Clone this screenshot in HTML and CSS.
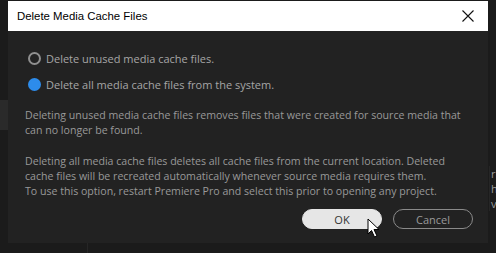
FILE: index.html
```html
<!DOCTYPE html>
<html lang="en">
  <head>
    <meta charset="UTF-8" />
    <title>Delete Media Cache Files</title>
    <link rel="stylesheet" href="styles.css">
  </head>
  <body>
    <div class="screen">
      <div class="side-left"></div>
      <div class="side-right">
        <span>rb</span>
        <span>h</span>
        <span>ve</span>
      </div>

      <div class="dialog">
        <div class="titlebar">
          <span class="title">Delete Media Cache Files</span>
          <svg class="close" width="12" height="12" viewBox="0 0 12 12">
            <path d="M0.5 0.5 L11.5 11.5 M11.5 0.5 L0.5 11.5" stroke="#111" stroke-width="1.1" fill="none" />
          </svg>
        </div>

        <div class="content">
          <label class="option">
            <span class="radio"></span>
            Delete unused media cache files.
          </label>
          <label class="option">
            <span class="radio checked"></span>
            Delete all media cache files from the system.
          </label>

          <p class="info">
            Deleting unused media cache files removes files that were created for source media that<br>
            can no longer be found.
          </p>
          <p class="info">
            Deleting all media cache files deletes all cache files from the current location. Deleted<br>
            cache files will be recreated automatically whenever source media requires them.<br>
            To use this option, restart Premiere Pro and select this prior to opening any project.
          </p>

          <div class="buttons">
            <button class="btn btn-primary">OK</button>
            <button class="btn">Cancel</button>
          </div>
        </div>
      </div>

      <div class="bottom-strip"></div>

      <!-- mouse pointer over OK -->
      <svg class="cursor" width="14" height="21" viewBox="0 0 14 21">
        <path d="M1 1 L1 16 L4.5 12.5 L7.5 19 L10 18 L7 11.5 L12 11.5 Z" fill="#fff" stroke="#000" stroke-width="1" />
      </svg>
    </div>
  </body>
</html>
```

FILE: styles.css
```css
body {
  margin: 0;
  background-color: #1b1b1b;
  font-family: "Open Sans", "Noto Sans", sans-serif;
}

.screen {
  position: relative;
  width: 496px;
  height: 253px;
  overflow: hidden;
}

.side-left {
  position: absolute;
  left: 0;
  top: 100px;
  width: 8px;
  height: 30px;
  background-color: #2a2a2a;
}

.side-right {
  position: absolute;
  left: 489px;
  top: 166px;
  display: flex;
  flex-direction: column;
  font-size: 11px;
  line-height: 15px;
  color: #9a9a9a;
  border-left: 1px solid #262626;
  padding-left: 1px;
}

.dialog {
  margin: 1px 0 0 8px;
  width: 480px;
  background-color: #222222;
}

.titlebar {
  height: 30px;
  background-color: #ffffff;
  display: flex;
  align-items: center;
  justify-content: space-between;
  padding: 0 14px 0 9px;
}

.title {
  font-family: "Liberation Sans", Arial, sans-serif;
  font-size: 11.4px;
  color: #000;
}

.content {
  height: 212px;
  box-sizing: border-box;
  padding: 21px 0 0 17px;
  color: #a6a6a6;
  font-size: 11px;
}

.option {
  display: flex;
  align-items: center;
  gap: 5px;
  height: 13px;
  margin-bottom: 13px;
  margin-left: 3px;
}

.option + .option {
  margin-bottom: 17px;
}

.radio {
  width: 9px;
  height: 9px;
  border: 2px solid #8f8f8f;
  border-radius: 50%;
}

.radio.checked {
  border-color: #2d8ceb;
  background-color: #2d8ceb;
}

.info {
  margin: 0 0 16px 0;
  line-height: 15px;
  color: #999999;
  font-size: 10.6px;
}

.buttons {
  display: flex;
  justify-content: flex-end;
  gap: 11px;
  padding-right: 15px;
  margin-top: -6px;
}

.btn {
  width: 80px;
  height: 20px;
  border-radius: 10px;
  border: 1px solid #8a8a8a;
  background: transparent;
  color: #9a9a9a;
  font-family: "Open Sans", sans-serif;
  font-size: 11px;
  padding: 0;
}

.btn-primary {
  background-color: #e6e6e6;
  border-color: #e6e6e6;
  color: #333;
}

.bottom-strip {
  height: 10px;
  border-left: 1px solid #262626;
  margin-left: 87px;
}

.cursor {
  position: absolute;
  left: 367px;
  top: 218px;
}
```
